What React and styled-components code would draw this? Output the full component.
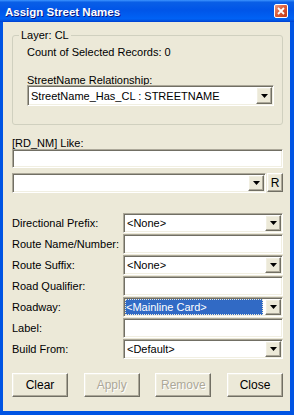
import React from 'react'
import styled, { createGlobalStyle, css } from 'styled-components'

const GlobalStyle = createGlobalStyle`
  html, body {
    margin: 0;
    padding: 0;
    background: #fff;
  }
  * {
    box-sizing: border-box;
  }
`

const sunken = css`
  background: #fff;
  border: 1px solid;
  border-color: #aca899 #fff #fff #aca899;
  box-shadow: inset 1px 1px 0 #716f64, inset -1px -1px 0 #f1efe2;
`

const raised = css`
  background: #ece9d8;
  border: 1px solid;
  border-color: #fff #716f64 #716f64 #fff;
  box-shadow: inset -1px -1px 0 #aca899, inset 1px 1px 0 #f1efe2;
`

const Window = styled.div`
  width: 294px;
  height: 415px;
  display: flex;
  flex-direction: column;
  background: #0054e3;
  font-family: 'Liberation Sans', Arial, sans-serif;
  font-size: 11px;
  color: #000;
`

const TitleBar = styled.div`
  height: 22px;
  flex: none;
  display: flex;
  align-items: center;
  justify-content: space-between;
  padding: 1px 6px 0 5px;
  background: linear-gradient(
    180deg,
    #3d95ff 0%,
    #0a5fe6 10%,
    #0055e8 45%,
    #0062f5 85%,
    #0052e0 94%,
    #003dd0 100%
  );
`

const Title = styled.span`
  color: #fff;
  font-weight: bold;
  font-size: 11.5px;
  text-shadow: 1px 1px 0 #0a1883;
`

const CloseButton = styled.div`
  width: 14px;
  height: 14px;
  margin-top: -1px;
  border: 1px solid #fff;
  border-radius: 2px;
  background: linear-gradient(135deg, #eb9a83 0%, #dc5d3a 45%, #c33a18 100%);
  display: flex;
  align-items: center;
  justify-content: center;
`

const Client = styled.div`
  flex: 1;
  margin: 0 4px 4px 3px;
  padding: 7px 7px 0 9px;
  background: #ece9d8;
  display: flex;
  flex-direction: column;
`

const GroupBox = styled.fieldset`
  margin: 0;
  padding: 0 8px 18px 6px;
  min-width: 0;
  border: 1px solid #d0d0bf;
  border-radius: 3px;
`

const Legend = styled.legend`
  padding: 0 2px;
  line-height: 13px;
`

const GroupBody = styled.div`
  padding-left: 8px;
  display: flex;
  flex-direction: column;
`

const Text = styled.div`
  line-height: 13px;
  margin-top: ${(p) => p.$top || 0}px;
  white-space: nowrap;
`

const Field = styled.div`
  ${sunken};
  height: ${(p) => p.$h || 20}px;
  margin-top: ${(p) => p.$top || 0}px;
  display: flex;
  align-items: stretch;
  flex: ${(p) => (p.$grow ? 1 : 'none')};
  min-width: 0;
`

const Value = styled.div`
  flex: 1;
  display: flex;
  align-items: center;
  padding-left: 3px;
  white-space: nowrap;
  overflow: hidden;
  ${(p) =>
    p.$selected &&
    css`
      margin: 1px 1px 1px 1px;
      padding-left: 1px;
      background: #316ac5;
      color: #fff;
      outline: 1px dotted #ece9d8;
      outline-offset: -1px;
    `}
`

const ArrowButton = styled.div`
  ${raised};
  width: 16px;
  margin: 1px;
  display: flex;
  align-items: center;
  justify-content: center;
`

const Arrow = () => (
  <svg width="7" height="4" viewBox="0 0 7 4">
    <path d="M0 0h7L3.5 4z" fill="#000" />
  </svg>
)

const ComboBox = ({ value, selected, h = 20, top = 0, grow }) => (
  <Field $h={h} $top={top} $grow={grow}>
    <Value $selected={selected}>{value}</Value>
    <ArrowButton>
      <Arrow />
    </ArrowButton>
  </Field>
)

const ComboRow = styled.div`
  display: flex;
  gap: 1px;
  margin-top: 5px;
  height: 20px;
`

const SmallButton = styled.div`
  ${raised};
  width: 16px;
  height: 19px;
  display: flex;
  align-items: center;
  justify-content: center;
  font-size: 12px;
`

const FormGrid = styled.div`
  margin-top: 20px;
  display: grid;
  grid-template-columns: 111px 1fr;
  grid-auto-rows: 20px;
  row-gap: 1px;
  align-items: center;
`

const Label = styled.div`
  line-height: 13px;
  white-space: nowrap;
`

const ButtonRow = styled.div`
  margin-top: 14px;
  display: flex;
  justify-content: space-between;
`

const PushButton = styled.div`
  ${raised};
  width: 56px;
  height: 24px;
  display: flex;
  align-items: center;
  justify-content: center;
  font-size: 12px;
  color: ${(p) => (p.$disabled ? '#aca899' : '#000')};
  text-shadow: ${(p) => (p.$disabled ? '1px 1px 0 #fff' : 'none')};
`

const rows = [
  { label: 'Directional Prefix:', combo: true, value: '<None>' },
  { label: 'Route Name/Number:' },
  { label: 'Route Suffix:', combo: true, value: '<None>' },
  { label: 'Road Qualifier:' },
  { label: 'Roadway:', combo: true, value: '<Mainline Card>', selected: true },
  { label: 'Label:' },
  { label: 'Build From:', combo: true, value: '<Default>' },
]

const App = () => {
  return (
    <>
      <GlobalStyle />
      <Window>
        <TitleBar>
          <Title>Assign Street Names</Title>
          <CloseButton>
            <svg width="8" height="8" viewBox="0 0 8 8">
              <path d="M1 1l6 6M7 1L1 7" stroke="#fff" strokeWidth="1.8" />
            </svg>
          </CloseButton>
        </TitleBar>
        <Client>
          <GroupBox>
            <Legend>Layer: CL</Legend>
            <GroupBody>
              <Text $top={4}>Count of Selected Records: 0</Text>
              <Text $top={15}>StreetName Relationship:</Text>
              <ComboBox value="StreetName_Has_CL : STREETNAME" h={21} top={-2} />
            </GroupBody>
          </GroupBox>
          <Text $top={12}>[RD_NM] Like:</Text>
          <Field $h={19} $top={-1} />
          <ComboRow>
            <ComboBox value="" grow />
            <SmallButton>R</SmallButton>
          </ComboRow>
          <FormGrid>
            {rows.map((row) => (
              <React.Fragment key={row.label}>
                <Label>{row.label}</Label>
                {row.combo ? (
                  <ComboBox value={row.value} selected={row.selected} />
                ) : (
                  <Field />
                )}
              </React.Fragment>
            ))}
          </FormGrid>
          <ButtonRow>
            <PushButton>Clear</PushButton>
            <PushButton $disabled>Apply</PushButton>
            <PushButton $disabled>Remove</PushButton>
            <PushButton>Close</PushButton>
          </ButtonRow>
        </Client>
      </Window>
    </>
  )
}

export default App
